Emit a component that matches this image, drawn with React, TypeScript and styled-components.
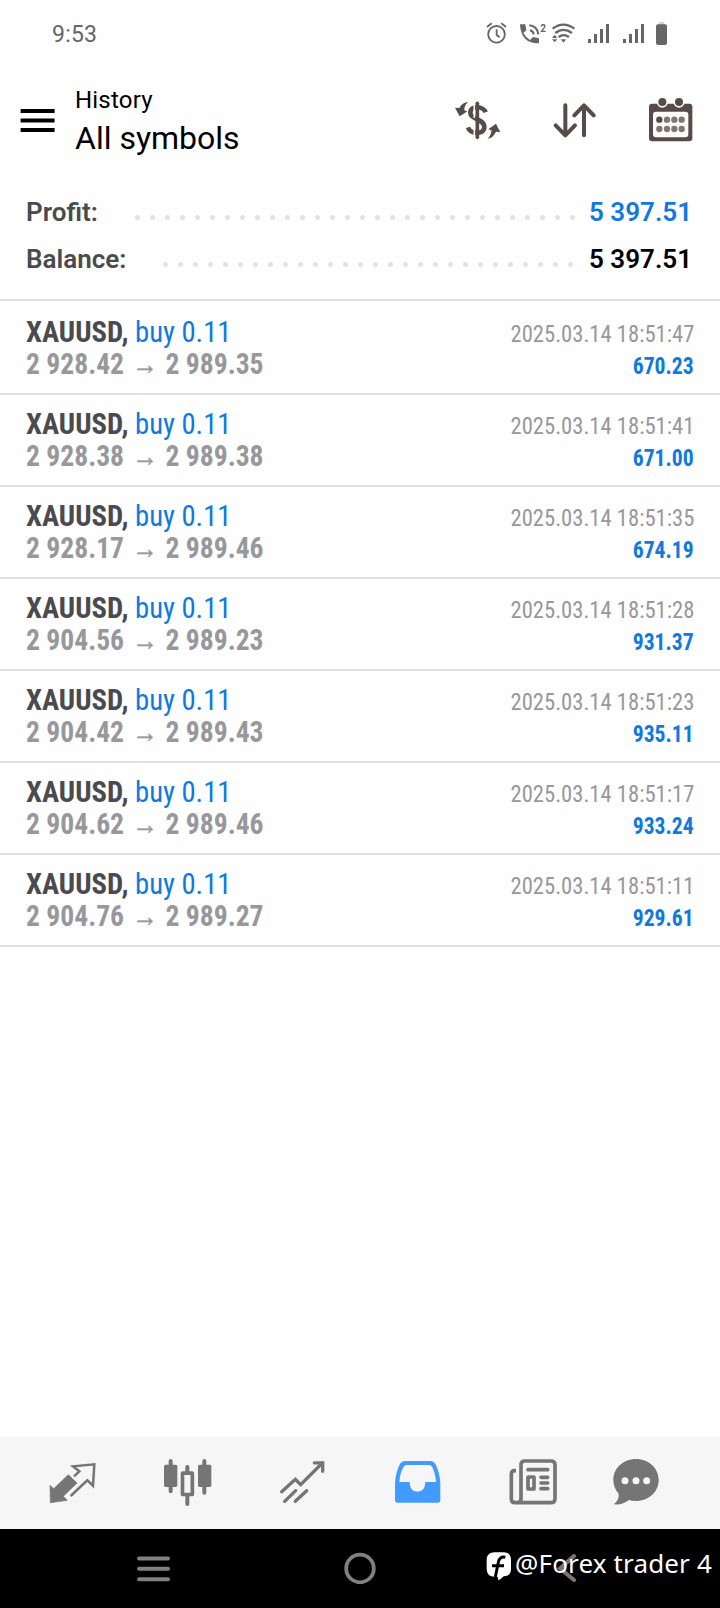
import React from "react";
import styled, { createGlobalStyle } from "styled-components";

const GlobalStyle = createGlobalStyle`
  * { box-sizing: border-box; }
  body { margin: 0; background: #fefefe; font-family: Roboto, "Liberation Sans", sans-serif; }
`;

const Screen = styled.div`
  width: 720px;
  height: 1608px;
  display: flex;
  flex-direction: column;
  background: #fefefe;
  overflow: hidden;
`;

const StatusBar = styled.div`
  height: 70px;
  padding: 0 52px;
  display: flex;
  justify-content: space-between;
  line-height: 69px;
  font-size: 23px;
  letter-spacing: 0.2px;
  color: #666;
`;

const StatusIcons = styled.svg`
  width: 184px;
  height: 28px;
  margin-top: 20px;
`;

const Header = styled.header`
  height: 118px;
  padding: 0 25px 0 21px;
  display: flex;
  align-items: flex-start;
`;

const MenuIcon = styled.svg`
  width: 34px;
  height: 24px;
  margin: 39px 20px 0 0;
  overflow: visible;
`;

const Titles = styled.div`
  flex: 1;
  padding-top: 15px;
  color: #000;
`;

const Subtitle = styled.div`
  font-size: 24px;
  line-height: 30px;
  letter-spacing: 0.2px;
`;

const Title = styled.div`
  margin-top: 3px;
  font-size: 32px;
  line-height: 40px;
`;

const Actions = styled.div`
  display: flex;
  gap: 48px;
  padding-top: 26px;
`;

const Icon = styled.svg`
  width: 48px;
  height: 48px;
  display: block;
  overflow: visible;
`;

const Summary = styled.section`
  padding: 1px 28px 16px 26px;
  border-bottom: 2px solid #e2e2e2;
`;

const SummaryRow = styled.div`
  height: 47px;
  display: flex;
  justify-content: space-between;
  line-height: 47px;
  font-size: 26px;
  font-weight: 600;
`;

const Label = styled.span`
  color: #4a4a4f;
`;

const Leader = styled.span<{ $count: number; $end: number }>`
  width: ${(p) => p.$count * 15}px;
  height: 5px;
  margin: 26px ${(p) => p.$end}px 0 auto;
  background: radial-gradient(circle at 7.5px 2.5px, #e3e3e4 2.1px, transparent 2.9px) 0 0 / 15px 5px;
`;

const Amount = styled.span<{ $color: string }>`
  width: 102px;
  display: flex;
  justify-content: flex-end;
  white-space: nowrap;
  color: ${(p) => p.$color};
`;

const Deal = styled.div<{ $first: boolean }>`
  padding: ${(p) => (p.$first ? 15 : 13)}px 26px 13px;
  border-bottom: 2px solid #e2e2e2;
`;

const Line = styled.div`
  height: 32px;
  display: flex;
  align-items: baseline;
  justify-content: space-between;
  line-height: 32px;
  white-space: pre;
  font-stretch: 75%;
`;

const Symbol = styled.span`
  font-size: 30px;
  color: #0f79e0;
  transform: scaleX(0.954);
  transform-origin: left;
  b { font-weight: 700; color: #4a4a4f; }
`;

const Prices = styled.span`
  display: flex;
  align-items: baseline;
  font-size: 30px;
  font-weight: 700;
  color: #97989b;
  transform: scaleX(0.92);
  transform-origin: left;
`;

const Arrow = styled.span`
  width: 45px;
  text-align: center;
  font-family: "Liberation Sans", sans-serif;
  font-size: 28px;
  font-weight: 400;
  line-height: 30px;
  -webkit-text-stroke: 0.5px #97989b;
`;

const Time = styled.span`
  font-size: 24.5px;
  color: #97989b;
  transform: scaleX(0.922);
  transform-origin: right;
`;

const Profit = styled.span`
  font-size: 24px;
  font-weight: 700;
  color: #0f79e0;
  transform: scaleX(0.9);
  transform-origin: right;
`;

const Filler = styled.div`
  flex: 1;
`;

const TabBar = styled.nav`
  height: 92px;
  padding: 21px 60px 0 48px;
  display: flex;
  background: #f6f6f7;
`;

const Tab = styled.div<{ $gap: number }>`
  margin-right: ${(p) => p.$gap}px;
`;

const SystemBar = styled.div`
  position: relative;
  height: 79px;
  padding: 23px 0 0 137px;
  display: flex;
  background: #000;
`;

const SystemIcon = styled.svg<{ $w: number; $gap: number }>`
  width: ${(p) => p.$w}px;
  height: 32px;
  margin-right: ${(p) => p.$gap}px;
`;

const Watermark = styled.div`
  position: absolute;
  left: 486px;
  top: 17px;
  display: flex;
  color: #fff;
  font-family: "Noto Sans", sans-serif;
  font-size: 26px;
  line-height: 35px;
  letter-spacing: 0.15px;
  white-space: nowrap;
`;

const WatermarkLogo = styled.svg`
  width: 26px;
  height: 30px;
  margin: 5px 3px 0 0;
`;

const deals = [
  ["2 928.42", "2 989.35", "47", "670.23"],
  ["2 928.38", "2 989.38", "41", "671.00"],
  ["2 928.17", "2 989.46", "35", "674.19"],
  ["2 904.56", "2 989.23", "28", "931.37"],
  ["2 904.42", "2 989.43", "23", "935.11"],
  ["2 904.62", "2 989.46", "17", "933.24"],
  ["2 904.76", "2 989.27", "11", "929.61"],
];

const G = "#757575";
const D = "#564b48";

function StatusGlyphs() {
  const bars = [0, 18, 36, 54];
  return (
    <StatusIcons viewBox="132 60 552 84" fill="#666">
      <g fill="none" stroke="#666" strokeWidth="5.5">
        <circle cx="169.500" cy="103" r="25" />
        <path d="M170 88v17l9 7" />
        <path d="M141 81l14-11M184 70l14 11" />
      </g>
      <path d="M240 73h16l3 18-9 8q7 13 20 21l9-9 18 4v15q-54 2-57-57z" />
      <g fill="none" stroke="#666" strokeWidth="6">
        <path d="M270 91q10 2 11 12M268 76q24 3 27 27" />
      </g>
      <text x="301" y="95" fontFamily="Roboto, sans-serif" fontSize="30" fontWeight="700">2</text>
      <g fill="none" stroke="#666" strokeWidth="7">
        <path d="M338 86q32-24 65 0M346 99q24-19 50 0M356 111q15-11 31 0" />
      </g>
      <path d="M336 114l8-10 8 10zM336 118h16l-8 9zM362 118h16l-7 10z" />
      {[444, 549].map((x) =>
        bars.map((b, i) => {
          const h = [12, 27, 42, 57][i];
          return <rect key={x + b} x={x + b} y={129 - h} width="9" height={h} />;
        })
      )}
      <rect x="656" y="66" width="17" height="9" rx="3" fill="#d0d0d0" />
      <rect x="648" y="73" width="33" height="62" rx="6" />
    </StatusIcons>
  );
}

function DollarIcon() {
  return (
    <Icon viewBox="45 288 144 144">
      <path d="M137 337C131 319 91 314 91 338C91 359 133 356 133 381C132 406 90 403 84 382" fill="none" stroke={D} strokeWidth="14" />
      <path d="M103 312V354M103 368V410" stroke="#fefefe" strokeWidth="5" />
      <path d="M112 310V412" stroke={D} strokeWidth="11" strokeLinecap="round" />
      <path d="M84 306Q67 307 58 324L45 323Q52 336 59 349Q71 342 82 334L73 331Q72 317 84 306Z" fill={D} />
      <path d="M143 416Q160 413 168 395L181 396Q174 384 168 371Q156 379 145 388L154 391Q155 404 143 416Z" fill={D} />
    </Icon>
  );
}

function SortIcon() {
  return (
    <Icon viewBox="333 288 144 144" fill="none" stroke={D} strokeWidth="12" strokeLinecap="round" strokeLinejoin="round">
      <path d="M376 316V405M347 376L376 406L405 376" />
      <path d="M432 406V317M403 346L432 316L461 346" />
    </Icon>
  );
}

function CalendarIcon() {
  return (
    <Icon viewBox="621 288 144 144">
      <rect x="627" y="311" width="130" height="113" rx="9" fill={D} />
      <rect x="639" y="335" width="106" height="77" rx="9" fill="#fefefe" />
      {[667, 717].map((x) => (
        <circle key={x} cx={x} cy="306" r="14.500" fill={D} stroke="#fefefe" strokeWidth="5" />
      ))}
      {[658, 681, 703, 725].map((x) =>
        [359, 387].map((y) => (
          <circle key={`${x}-${y}`} cx={x} cy={y} r="9.500" fill={x === 658 && y === 359 ? D : "#80766f"} />
        ))
      )}
    </Icon>
  );
}

function QuotesIcon() {
  return (
    <Icon viewBox="144 84 144 144">
      <path d="M150 166L161 176L203 136L206 135L231 159L190 199L202 211L151 218Z" fill={G} stroke={G} strokeWidth="2" strokeLinejoin="round" />
      <path d="M222 139L238 124L219 109L283 103L279 167L262 151L212 198" fill="none" stroke={G} strokeWidth="7.5" />
    </Icon>
  );
}

function ChartIcon() {
  return (
    <Icon viewBox="489 84 144 144">
      <g stroke={G} strokeWidth="12" strokeLinecap="round">
        <path d="M512 93V184M613 93V188M562 111V126M562 198V222" />
      </g>
      <rect x="492" y="104" width="40" height="67" rx="5" fill={G} />
      <rect x="594" y="104" width="40" height="67" rx="5" fill={G} />
      <rect x="547.500" y="129.500" width="29.500" height="64" rx="1" fill="#f6f6f7" stroke={G} strokeWidth="11" />
    </Icon>
  );
}

function TradeIcon() {
  return (
    <Icon viewBox="837 84 144 144" fill="none" stroke={G} strokeWidth="10">
      <path d="M845 185L886 148L902 164L967 99" strokeLinecap="round" />
      <path d="M943 98.500H968V124" strokeLinecap="round" strokeWidth="10" />
      <path d="M854 214L887 182M886 214L920 182" strokeLinecap="round" />
    </Icon>
  );
}

function HistoryIcon() {
  return (
    <Icon viewBox="102 84 144 144">
      <path d="M134 93H212Q221 93 226 101Q240 129 241 160V210Q241 218 233 218H113Q105 218 105 210V160Q106 129 120 101Q125 93 134 93Z" fill="#429cff" />
      <path d="M140 105H207Q213 105 217 112Q226 130 228 156H196Q196 184 172 185Q149 184 149 156H118Q120 130 130 112Q134 105 140 105Z" fill="#f6f6f7" />
    </Icon>
  );
}

function NewsIcon() {
  return (
    <Icon viewBox="447 84 144 144" fill="none" stroke={G} strokeWidth="11">
      <path d="M468 122H464Q454 122 454 133V207Q454 218 465 218H572Q585 218 585 206V104Q585 93 573 93H494Q483 93 483 104V207Q483 218 471 218" />
      <path d="M504 119H563M543 142H563M543 159H563M543 176H563" strokeLinecap="round" />
      <rect x="504" y="141" width="18" height="36" rx="1" />
    </Icon>
  );
}

function MessagesIcon() {
  return (
    <Icon viewBox="756 84 144 144">
      <path d="M828 87C866 87 896 114 896 150C896 186 866 213 828 213C820 213 813 212 807 210C795 219 780 225 761 223C773 213 777 204 776 191C766 181 760 166 760 150C760 114 790 87 828 87Z" fill={G} />
      {[795, 828, 860].map((x) => (
        <circle key={x} cx={x} cy="152" r="10.500" fill="#f6f6f7" />
      ))}
    </Icon>
  );
}

const tabs: [React.FC, number][] = [
  [QuotesIcon, 67],
  [ChartIcon, 68],
  [TradeIcon, 67],
  [HistoryIcon, 67],
  [NewsIcon, 55],
  [MessagesIcon, 0],
];

export default function App() {
  return (
    <Screen>
      <GlobalStyle />
      <StatusBar>
        <span>9:53</span>
        <StatusGlyphs />
      </StatusBar>
      <Header>
        <MenuIcon viewBox="0 0 34 24">
          <path d="M-0.400 2H33.600M-0.400 11.500H33.600M-0.400 21H33.600" stroke="#000" strokeWidth="4" />
        </MenuIcon>
        <Titles>
          <Subtitle>History</Subtitle>
          <Title>All symbols</Title>
        </Titles>
        <Actions>
          <DollarIcon />
          <SortIcon />
          <CalendarIcon />
        </Actions>
      </Header>
      <Summary>
        <SummaryRow>
          <Label>Profit:</Label>
          <Leader $count={30} $end={10} />
          <Amount $color="#0f79e0">5 397.51</Amount>
        </SummaryRow>
        <SummaryRow>
          <Label>Balance:</Label>
          <Leader $count={28} $end={12} />
          <Amount $color="#000">5 397.51</Amount>
        </SummaryRow>
      </Summary>
      {deals.map(([open, close, sec, profit], i) => (
        <Deal key={sec} $first={i === 0}>
          <Line>
            <Symbol><b>XAUUSD,</b> buy 0.11</Symbol>
            <Time>2025.03.14 18:51:{sec}</Time>
          </Line>
          <Line>
            <Prices>
              <span>{open}</span>
              <Arrow>→</Arrow>
              <span>{close}</span>
            </Prices>
            <Profit>{profit}</Profit>
          </Line>
        </Deal>
      ))}
      <Filler />
      <TabBar>
        {tabs.map(([TabIcon, gap], i) => (
          <Tab key={i} $gap={gap}>
            <TabIcon />
          </Tab>
        ))}
      </TabBar>
      <SystemBar>
        <SystemIcon $w={33} $gap={174} viewBox="0 0 33 32">
          <path d="M2 6.500H31M2 16.800H31M2 27.200H31" stroke="#808080" strokeWidth="4" strokeLinecap="round" />
        </SystemIcon>
        <SystemIcon $w={32} $gap={181} viewBox="0 0 32 32">
          <circle cx="16" cy="16.500" r="13.800" fill="none" stroke="#808080" strokeWidth="3.800" />
        </SystemIcon>
        <SystemIcon $w={22} $gap={0} viewBox="0 0 22 32">
          <path d="M17 4L3 16.500L17 28" fill="none" stroke="#777" strokeWidth="4" strokeLinecap="round" />
        </SystemIcon>
        <Watermark>
          <WatermarkLogo viewBox="378 362 78 90">
            <path d="M404 366H430Q453 366 453 389V416Q453 437 431 438Q424 446 415 450L413 439H404Q380 439 380 416V389Q380 366 404 366Z" fill="#fff" />
            <path d="M436 381Q418 377 415 396L406 440M396 406H432" fill="none" stroke="#000" strokeWidth="9" />
          </WatermarkLogo>
          <span>@Forex trader 4</span>
        </Watermark>
      </SystemBar>
    </Screen>
  );
}
